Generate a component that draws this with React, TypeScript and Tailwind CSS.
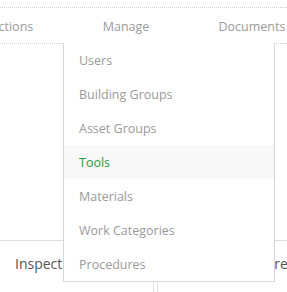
import React from 'react';

const tabs = ['Inspections', 'Manage', 'Documents'];

const menuItems = [
  'Users',
  'Building Groups',
  'Asset Groups',
  'Tools',
  'Materials',
  'Work Categories',
  'Procedures',
];

export default function App() {
  const active = 'Tools';

  return (
    <div
      className="relative w-[287px] h-[292px] overflow-hidden bg-white"
      style={{ fontFamily: '"Open Sans", "Noto Sans", sans-serif' }}
    >
      {/* Top nav */}
      <div className="mt-[7px] border-t border-dotted border-[#cfcfcf]">
        <div className="flex h-[36px] items-center pt-[3px] border-b border-dotted border-[#cfcfcf] ml-[-63px]">
          {tabs.map((tab) => (
            <div
              key={tab}
              className="w-[126px] shrink-0 text-center text-[12.5px] text-[#9a9a9a]"
            >
              {tab}
            </div>
          ))}
        </div>
      </div>

      {/* Content rows */}
      <div className="mt-[196px] flex h-[60px] border-t border-[#dedede]">
        <div className="w-[154px] shrink-0 border-r border-[#dedede] pl-[15px] pt-[12px] text-[14px] text-[#555]">
          Inspections
        </div>
        <div className="w-[3px] shrink-0" />
        <div className="flex-1 border-l border-[#dedede] pt-[12px] pl-[62px] text-[14px] text-[#555] whitespace-nowrap">
          Procedures
        </div>
      </div>

      {/* Manage dropdown */}
      <div className="absolute left-[63px] top-[43px] w-[212px] border-x border-b border-[#d6d6d6] bg-white">
        {menuItems.map((item) => (
          <div
            key={item}
            className={`flex h-[34px] items-center pl-[15px] pt-[2px] text-[12.5px] ${
              item === active ? 'bg-[#f8f8f8] text-[#1f9d47]' : 'text-[#9a9a9a]'
            }`}
          >
            {item}
          </div>
        ))}
      </div>
    </div>
  );
}
